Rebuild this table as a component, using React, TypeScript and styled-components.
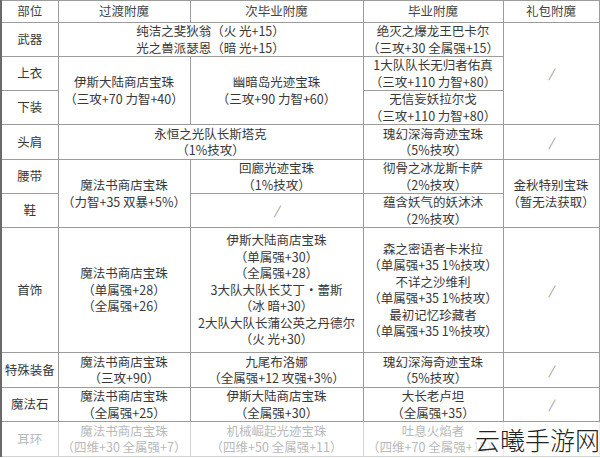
import { Fragment } from 'react';
import styled, { createGlobalStyle } from 'styled-components';

const GlobalStyle = createGlobalStyle`
    html, body {
        margin: 0;
        padding: 0;
        background: #fff;
    }
    body {
        font-family: "Noto Sans CJK SC", "Noto Sans", sans-serif;
    }
`;

const Page = styled.div`
    position: relative;
    width: 600px;
    height: 458px;
    overflow: hidden;
    background: #fff;
`;

const Table = styled.table`
    width: 598px;
    border-collapse: collapse;
    table-layout: fixed;
    border-left: 2px solid #6a6a6a;
    color: #333;
    font-size: 12.5px;
    line-height: 16.5px;
`;

const Row = styled.tr<{ $h: number }>`
    height: ${(p) => p.$h}px;
`;

const Cell = styled.td<{ $faded?: boolean }>`
    border: 1px solid ${(p) => (p.$faded ? '#d4d4d4' : '#9c9c9c')};
    color: ${(p) => (p.$faded ? '#b9b9b9' : '#383838')};
    text-align: center;
    vertical-align: middle;
    padding: 0;
    white-space: nowrap;
`;

const Head = styled(Cell).attrs({ as: 'th' })`
    font-weight: normal;
    color: #444;
`;

const Slash = styled.span`
    color: #888;
    font-size: 12px;
    font-style: italic;
`;

const Watermark = styled.div`
    position: absolute;
    right: 0;
    bottom: 2px;
    padding-left: 4px;
    font-size: 25px;
    line-height: 34px;
    color: #222;
    font-weight: 300;
    background: rgba(255, 255, 255, 0.55);
`;

const lines = (t: string) =>
    t.split('\n').map((l, i) => (
        <Fragment key={i}>
            {i > 0 && <br />}
            {l}
        </Fragment>
    ));

const none = <Slash>/</Slash>;

export default function App() {
    return (
        <Page>
            <GlobalStyle />
            <Table>
                <colgroup>
                    <col style={{ width: 57 }} />
                    <col style={{ width: 132 }} />
                    <col style={{ width: 173 }} />
                    <col style={{ width: 140 }} />
                    <col style={{ width: 96 }} />
                </colgroup>
                <tbody>
                    <Row $h={22}>
                        <Head>部位</Head>
                        <Head>过渡附魔</Head>
                        <Head>次毕业附魔</Head>
                        <Head>毕业附魔</Head>
                        <Head>礼包附魔</Head>
                    </Row>
                    <Row $h={33}>
                        <Cell>武器</Cell>
                        <Cell colSpan={2}>
                            {lines('纯洁之斐狄翁（火 光+15）\n光之兽派瑟恩（暗 光+15）')}
                        </Cell>
                        <Cell>{lines('绝灭之爆龙王巴卡尔\n（三攻+30 全属强+15）')}</Cell>
                        <Cell rowSpan={3}>{none}</Cell>
                    </Row>
                    <Row $h={33}>
                        <Cell>上衣</Cell>
                        <Cell rowSpan={2}>{lines('伊斯大陆商店宝珠\n（三攻+70 力智+40）')}</Cell>
                        <Cell rowSpan={2}>{lines('幽暗岛光迹宝珠\n（三攻+90 力智+60）')}</Cell>
                        <Cell>{lines('1大队队长无归者佑真\n（三攻+110 力智+80）')}</Cell>
                    </Row>
                    <Row $h={33}>
                        <Cell>下装</Cell>
                        <Cell>{lines('无信妄妖拉尔戈\n（三攻+110 力智+80）')}</Cell>
                    </Row>
                    <Row $h={35}>
                        <Cell>头肩</Cell>
                        <Cell colSpan={2}>{lines('永恒之光队长斯塔克\n（1%技攻）')}</Cell>
                        <Cell>{lines('瑰幻深海奇迹宝珠\n（5%技攻）')}</Cell>
                        <Cell>{none}</Cell>
                    </Row>
                    <Row $h={34}>
                        <Cell>腰带</Cell>
                        <Cell rowSpan={2}>{lines('魔法书商店宝珠\n（力智+35 双暴+5%）')}</Cell>
                        <Cell>{lines('回廊光迹宝珠\n（1%技攻）')}</Cell>
                        <Cell>{lines('彻骨之冰龙斯卡萨\n（2%技攻）')}</Cell>
                        <Cell rowSpan={2}>{lines('金秋特别宝珠\n（暂无法获取）')}</Cell>
                    </Row>
                    <Row $h={34}>
                        <Cell>鞋</Cell>
                        <Cell>{none}</Cell>
                        <Cell>{lines('蕴含妖气的妖沐沐\n（2%技攻）')}</Cell>
                    </Row>
                    <Row $h={125}>
                        <Cell>首饰</Cell>
                        <Cell>{lines('魔法书商店宝珠\n（单属强+28）\n（全属强+26）')}</Cell>
                        <Cell>
                            {lines(
                                '伊斯大陆商店宝珠\n（单属强+30）\n（全属强+28）\n3大队大队长艾丁・蕾斯\n（冰 暗+30）\n2大队大队长蒲公英之丹德尔\n（火 光+30）'
                            )}
                        </Cell>
                        <Cell>
                            {lines(
                                '森之密语者卡米拉\n（单属强+35 1%技攻）\n不详之沙维利\n（单属强+35 1%技攻）\n最初记忆珍藏者\n（单属强+35 1%技攻）'
                            )}
                        </Cell>
                        <Cell>{none}</Cell>
                    </Row>
                    <Row $h={35}>
                        <Cell>特殊装备</Cell>
                        <Cell>{lines('魔法书商店宝珠\n（三攻+90）')}</Cell>
                        <Cell>{lines('九尾布洛娜\n（全属强+12 攻强+3%）')}</Cell>
                        <Cell>{lines('瑰幻深海奇迹宝珠\n（5%技攻）')}</Cell>
                        <Cell>{none}</Cell>
                    </Row>
                    <Row $h={32}>
                        <Cell>魔法石</Cell>
                        <Cell>{lines('魔法书商店宝珠\n（全属强+25）')}</Cell>
                        <Cell>{lines('伊斯大陆商店宝珠\n（全属强+30）')}</Cell>
                        <Cell>{lines('大长老卢坦\n（全属强+35）')}</Cell>
                        <Cell>{none}</Cell>
                    </Row>
                    <Row $h={35}>
                        <Cell $faded>耳环</Cell>
                        <Cell $faded>{lines('魔法书商店宝珠\n（四维+30 全属强+7）')}</Cell>
                        <Cell $faded>{lines('机械崛起光迹宝珠\n（四维+50 全属强+11）')}</Cell>
                        <Cell $faded>{lines('吐息火焰者\n（四维+70 全属强+15）')}</Cell>
                        <Cell $faded />
                    </Row>
                </tbody>
            </Table>
            <Watermark>云曦手游网</Watermark>
        </Page>
    );
}
